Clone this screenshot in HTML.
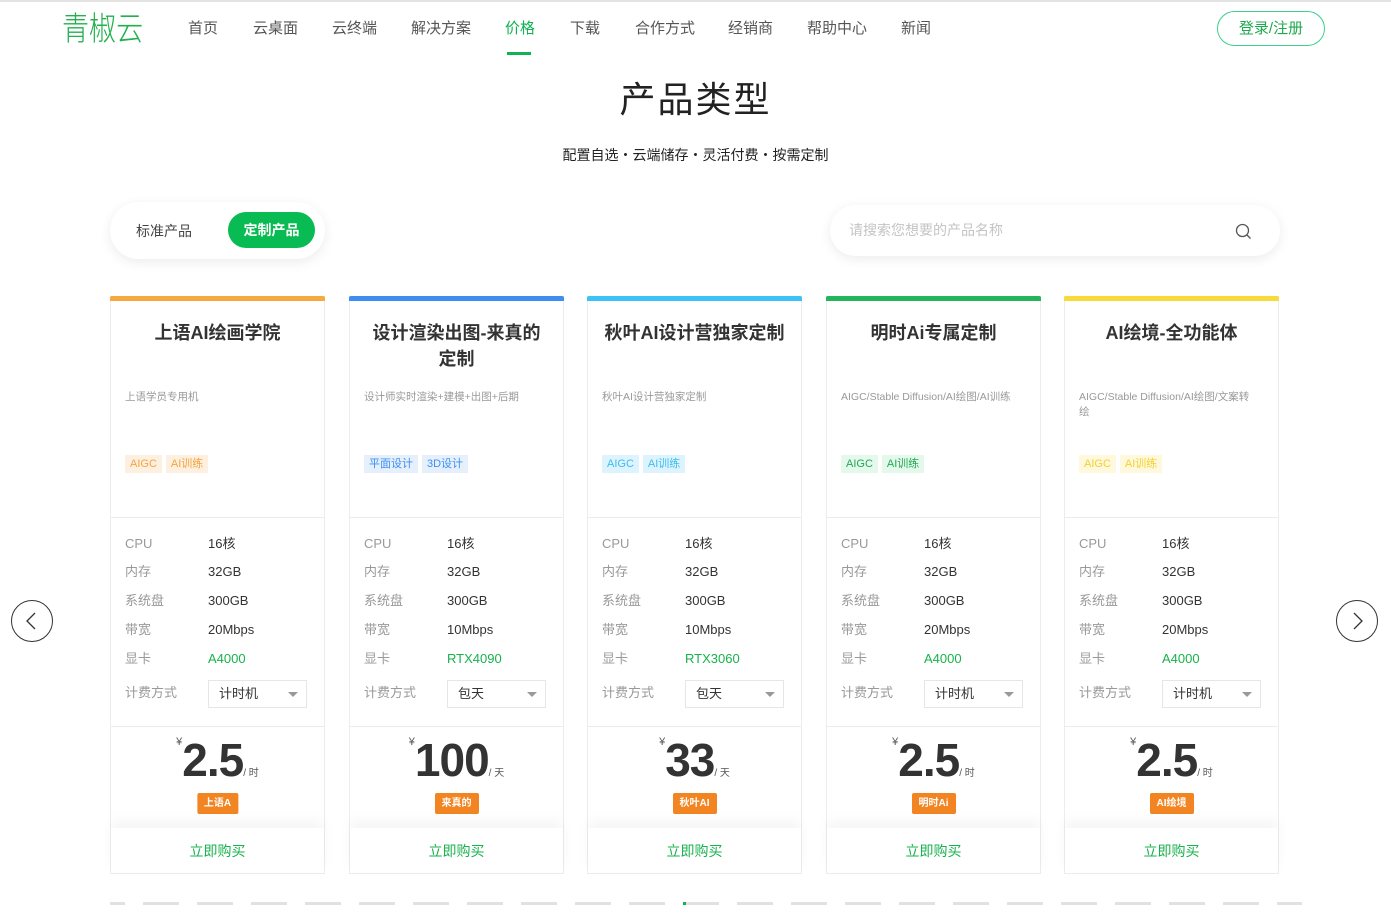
<!DOCTYPE html>
<html><head><meta charset="utf-8"><style>
*{margin:0;padding:0;box-sizing:border-box}
body{width:1391px;height:919px;overflow:hidden;background:#fff;font-family:"Liberation Sans","Noto Sans CJK SC",sans-serif;color:#333;position:relative}
.abs{position:absolute}
.topline{left:0;top:0;width:1391px;height:2px;background:#e3e3e3}
.logo{left:62px;top:9px;font-size:33px;color:#22b04e;font-weight:300;transform:scaleX(.82);transform-origin:left top;line-height:40px}
.nav{top:19px;font-size:15px;color:#555;line-height:20px}
.nav.on{color:#0fb352}
.navbar{left:507px;top:52px;width:24px;height:3px;background:#0fb352}
.login{left:1217px;top:11px;width:108px;height:35px;border:1px solid #3ccf8e;border-radius:18px;color:#1ea94d;font-size:15px;text-align:center;line-height:33px}
h1{position:absolute;left:0;width:1391px;top:76px;text-align:center;font-size:36px;font-weight:400;color:#222;letter-spacing:2px;line-height:48px}
.sub{left:0;width:1391px;top:145px;text-align:center;font-size:14px;color:#222;line-height:20px}
.tabs{left:110px;top:202px;width:215px;height:57px;border-radius:29px;background:#fff;box-shadow:0 3px 12px rgba(0,0,0,.08)}
.tabs .a{position:absolute;left:26px;top:19px;font-size:14px;color:#444;line-height:20px}
.tabs .b{position:absolute;left:118px;top:10px;width:87px;height:36px;border-radius:18px;background:#08bb52;color:#fff;font-size:14px;font-weight:bold;text-align:center;line-height:36px}
.search{left:830px;top:205px;width:450px;height:51px;border-radius:26px;background:#fff;box-shadow:0 3px 12px rgba(0,0,0,.08)}
.search span{position:absolute;left:19px;top:15px;font-size:14px;color:#c4c4c4;line-height:20px}
.card{position:absolute;top:296px;width:215px;height:578px;border:1px solid #ececec;border-top:none;background:#fff}
.bar{position:absolute;left:-1px;top:0;width:215px;height:5px;border-radius:2px 2px 0 0}
.title{position:absolute;left:10px;right:10px;top:24px;text-align:center;font-size:18px;font-weight:bold;color:#333;line-height:26px}
.desc{position:absolute;left:14px;right:14px;top:94px;font-size:10.5px;color:#999;line-height:15px}
.tags{position:absolute;left:14px;top:158px}
.tag{display:inline-block;height:18px;line-height:18px;padding:0 5px;font-size:11px;margin-right:4px}
.div1{position:absolute;left:0;right:0;top:221px;height:1px;background:#ececec}
.div2{position:absolute;left:0;right:0;top:430px;height:1px;background:#ececec}
.row,.val{position:absolute;font-size:13px;line-height:18px;height:18px}
.row{left:14px;color:#999}
.val{left:97px;color:#333}
.sel{position:absolute;left:97px;top:384px;width:99px;height:28px;border:1px solid #e6e6e6;font-size:13px;color:#333;padding-left:10px;line-height:26px}
.sel i{position:absolute;right:8px;top:11px;border:5px solid transparent;border-top:5px solid #999;border-bottom:none}
.price{position:absolute;left:0;right:0;top:436px;text-align:center;white-space:nowrap}
.price .y{font-size:11px;color:#555;vertical-align:top;position:relative;top:4px}
.price .n{font-size:46px;font-weight:bold;color:#333;letter-spacing:-1px;line-height:56px}
.price .u{font-size:10px;color:#555}
.badge{position:absolute;top:497px;left:50%;transform:translateX(-50%);height:21px;line-height:21px;padding:0 7px;background:#f28522;color:#fff;font-size:10px;font-weight:bold;border-radius:2px}
.buy{position:absolute;left:0;right:0;top:532px;height:46px;text-align:center;line-height:46px;font-size:14px;color:#17b24c;box-shadow:0 -8px 12px rgba(0,0,0,.04)}
.arrow{width:42px;height:42px;border:1px solid #333;border-radius:50%;top:600px}
.dash{top:902px;height:3px;background:#e1e1e1}
</style></head><body>
<div class="abs topline"></div>
<div class="abs logo">青椒云</div>
<div class="abs nav" style="left:188px">首页</div>
<div class="abs nav" style="left:253px">云桌面</div>
<div class="abs nav" style="left:332px">云终端</div>
<div class="abs nav" style="left:411px">解决方案</div>
<div class="abs nav on" style="left:505px">价格</div>
<div class="abs nav" style="left:570px">下载</div>
<div class="abs nav" style="left:635px">合作方式</div>
<div class="abs nav" style="left:728px">经销商</div>
<div class="abs nav" style="left:807px">帮助中心</div>
<div class="abs nav" style="left:901px">新闻</div>
<div class="abs navbar"></div>
<div class="abs login">登录/注册</div>
<h1>产品类型</h1>
<div class="abs sub">配置自选・云端储存・灵活付费・按需定制</div>
<div class="abs tabs"><span class="a">标准产品</span><span class="b">定制产品</span></div>
<div class="abs search"><span>请搜索您想要的产品名称</span>
<svg style="position:absolute;left:405px;top:18px" width="17" height="17" viewBox="0 0 17 17"><circle cx="7.5" cy="7.5" r="6" fill="none" stroke="#555" stroke-width="1.3"/><path d="M12 12l3.5 3.5" stroke="#555" stroke-width="1.3"/></svg></div>

<div class="abs arrow" style="left:11px"><svg width="42" height="42" viewBox="0 0 42 42" style="position:absolute;left:-1px;top:-1px"><path d="M24 13l-8 8 8 8" fill="none" stroke="#333" stroke-width="1.3"/></svg></div>
<div class="abs arrow" style="left:1336px"><svg width="42" height="42" viewBox="0 0 42 42" style="position:absolute;left:-1px;top:-1px"><path d="M18 13l8 8-8 8" fill="none" stroke="#333" stroke-width="1.3"/></svg></div>

<div class="card" style="left:110px"><div class="bar" style="background:#f7a841"></div>
<div class="title">上语AI绘画学院</div><div class="desc">上语学员专用机</div>
<div class="tags"><span class="tag" style="background:#fdf0e0;color:#f5a33c">AIGC</span><span class="tag" style="background:#fdf0e0;color:#f5a33c">AI训练</span></div>
<div class="div1"></div>
<div class="row" style="top:239px">CPU</div><div class="val" style="top:239px">16核</div>
<div class="row" style="top:267px">内存</div><div class="val" style="top:267px">32GB</div>
<div class="row" style="top:296px">系统盘</div><div class="val" style="top:296px">300GB</div>
<div class="row" style="top:325px">带宽</div><div class="val" style="top:325px">20Mbps</div>
<div class="row" style="top:354px">显卡</div><div class="val" style="top:354px;color:#17b24c">A4000</div>
<div class="row" style="top:388px">计费方式</div><div class="sel">计时机<i></i></div>
<div class="div2"></div>
<div class="price"><span class="y">¥</span><span class="n">2.5</span><span class="u">/ 时</span></div>
<div class="badge">上语A</div><div class="buy">立即购买</div></div>

<div class="card" style="left:349px"><div class="bar" style="background:#3d8ef0"></div>
<div class="title">设计渲染出图-来真的<br>定制</div><div class="desc">设计师实时渲染+建模+出图+后期</div>
<div class="tags"><span class="tag" style="background:#e6f0fd;color:#3b8ff0">平面设计</span><span class="tag" style="background:#e6f0fd;color:#3b8ff0">3D设计</span></div>
<div class="div1"></div>
<div class="row" style="top:239px">CPU</div><div class="val" style="top:239px">16核</div>
<div class="row" style="top:267px">内存</div><div class="val" style="top:267px">32GB</div>
<div class="row" style="top:296px">系统盘</div><div class="val" style="top:296px">300GB</div>
<div class="row" style="top:325px">带宽</div><div class="val" style="top:325px">10Mbps</div>
<div class="row" style="top:354px">显卡</div><div class="val" style="top:354px;color:#17b24c">RTX4090</div>
<div class="row" style="top:388px">计费方式</div><div class="sel">包天<i></i></div>
<div class="div2"></div>
<div class="price"><span class="y">¥</span><span class="n">100</span><span class="u">/ 天</span></div>
<div class="badge">来真的</div><div class="buy">立即购买</div></div>

<div class="card" style="left:587px"><div class="bar" style="background:#3bc2f7"></div>
<div class="title">秋叶AI设计营独家定制</div><div class="desc">秋叶AI设计营独家定制</div>
<div class="tags"><span class="tag" style="background:#ddf3fd;color:#3bbdf2">AIGC</span><span class="tag" style="background:#ddf3fd;color:#3bbdf2">AI训练</span></div>
<div class="div1"></div>
<div class="row" style="top:239px">CPU</div><div class="val" style="top:239px">16核</div>
<div class="row" style="top:267px">内存</div><div class="val" style="top:267px">32GB</div>
<div class="row" style="top:296px">系统盘</div><div class="val" style="top:296px">300GB</div>
<div class="row" style="top:325px">带宽</div><div class="val" style="top:325px">10Mbps</div>
<div class="row" style="top:354px">显卡</div><div class="val" style="top:354px;color:#17b24c">RTX3060</div>
<div class="row" style="top:388px">计费方式</div><div class="sel">包天<i></i></div>
<div class="div2"></div>
<div class="price"><span class="y">¥</span><span class="n">33</span><span class="u">/ 天</span></div>
<div class="badge">秋叶AI</div><div class="buy">立即购买</div></div>

<div class="card" style="left:826px"><div class="bar" style="background:#23b45c"></div>
<div class="title">明时Ai专属定制</div><div class="desc">AIGC/Stable Diffusion/AI绘图/AI训练</div>
<div class="tags"><span class="tag" style="background:#e4f8ec;color:#1faa50">AIGC</span><span class="tag" style="background:#e4f8ec;color:#1faa50">AI训练</span></div>
<div class="div1"></div>
<div class="row" style="top:239px">CPU</div><div class="val" style="top:239px">16核</div>
<div class="row" style="top:267px">内存</div><div class="val" style="top:267px">32GB</div>
<div class="row" style="top:296px">系统盘</div><div class="val" style="top:296px">300GB</div>
<div class="row" style="top:325px">带宽</div><div class="val" style="top:325px">20Mbps</div>
<div class="row" style="top:354px">显卡</div><div class="val" style="top:354px;color:#17b24c">A4000</div>
<div class="row" style="top:388px">计费方式</div><div class="sel">计时机<i></i></div>
<div class="div2"></div>
<div class="price"><span class="y">¥</span><span class="n">2.5</span><span class="u">/ 时</span></div>
<div class="badge">明时Ai</div><div class="buy">立即购买</div></div>

<div class="card" style="left:1064px"><div class="bar" style="background:#fada3b"></div>
<div class="title">AI绘境-全功能体</div><div class="desc">AIGC/Stable Diffusion/AI绘图/文案转<br>绘</div>
<div class="tags"><span class="tag" style="background:#fef8dc;color:#f5d030">AIGC</span><span class="tag" style="background:#fef8dc;color:#f5d030">AI训练</span></div>
<div class="div1"></div>
<div class="row" style="top:239px">CPU</div><div class="val" style="top:239px">16核</div>
<div class="row" style="top:267px">内存</div><div class="val" style="top:267px">32GB</div>
<div class="row" style="top:296px">系统盘</div><div class="val" style="top:296px">300GB</div>
<div class="row" style="top:325px">带宽</div><div class="val" style="top:325px">20Mbps</div>
<div class="row" style="top:354px">显卡</div><div class="val" style="top:354px;color:#17b24c">A4000</div>
<div class="row" style="top:388px">计费方式</div><div class="sel">计时机<i></i></div>
<div class="div2"></div>
<div class="price"><span class="y">¥</span><span class="n">2.5</span><span class="u">/ 时</span></div>
<div class="badge">AI绘境</div><div class="buy">立即购买</div></div>

<div class="abs dash" style="left:110px;width:15px"></div>
<div class="abs dash" style="left:143px;width:36px"></div>
<div class="abs dash" style="left:197px;width:36px"></div>
<div class="abs dash" style="left:251px;width:36px"></div>
<div class="abs dash" style="left:305px;width:36px"></div>
<div class="abs dash" style="left:359px;width:36px"></div>
<div class="abs dash" style="left:413px;width:36px"></div>
<div class="abs dash" style="left:467px;width:36px"></div>
<div class="abs dash" style="left:521px;width:36px"></div>
<div class="abs dash" style="left:575px;width:36px"></div>
<div class="abs dash" style="left:629px;width:36px"></div>
<div class="abs dash" style="left:683px;width:36px"></div>
<div class="abs dash" style="left:683px;width:3px;background:#0fb352"></div>
<div class="abs dash" style="left:737px;width:36px"></div>
<div class="abs dash" style="left:791px;width:36px"></div>
<div class="abs dash" style="left:845px;width:36px"></div>
<div class="abs dash" style="left:899px;width:36px"></div>
<div class="abs dash" style="left:953px;width:36px"></div>
<div class="abs dash" style="left:1007px;width:36px"></div>
<div class="abs dash" style="left:1061px;width:36px"></div>
<div class="abs dash" style="left:1115px;width:36px"></div>
<div class="abs dash" style="left:1169px;width:36px"></div>
<div class="abs dash" style="left:1223px;width:36px"></div>
<div class="abs dash" style="left:1277px;width:25px"></div>
</body></html>
